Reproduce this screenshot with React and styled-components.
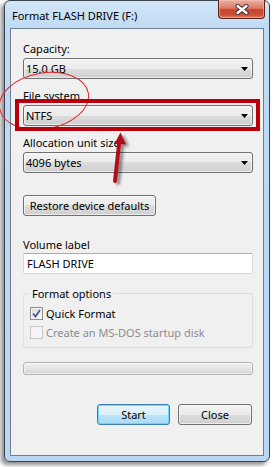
import React from 'react';
import styled, { createGlobalStyle } from 'styled-components';

const GlobalStyle = createGlobalStyle`
	html, body {
		margin: 0;
		padding: 0;
		background: #ffffff;
	}
	body {
		font-family: 'Noto Sans', 'Open Sans', sans-serif;
		font-size: 11px;
		color: #000;
	}
	* {
		box-sizing: border-box;
	}
`;

const Page = styled.div`
	position: relative;
	width: 278px;
	height: 467px;
	padding: 0 8px 0 4px;
	overflow: hidden;
`;

const Window = styled.div`
	width: 266px;
	height: 462px;
	border: 1px solid #3a4350;
	border-radius: 6px;
	background: linear-gradient(#d3e6f8, #bfdaf4 28px, #bad6f3);
	box-shadow: -3px 3px 4px rgba(0, 0, 0, 0.45);
	display: flex;
	flex-direction: column;
`;

const TitleBar = styled.div`
	height: 27px;
	display: flex;
	align-items: flex-start;
	padding-left: 7px;
	flex-shrink: 0;
`;

const Title = styled.div`
	line-height: 29px;
	font-size: 11px;
	color: #000;
	white-space: nowrap;
`;

const CloseButton = styled.div`
	margin-left: auto;
	margin-right: 4px;
	margin-top: -1px;
	width: 47px;
	height: 19px;
	border: 1px solid #5a2218;
	border-top: none;
	border-radius: 0 0 4px 4px;
	background: linear-gradient(#eab1a4, #dc7b66 45%, #c5442b 55%, #cd5337 85%, #e0856a);
	box-shadow: inset 0 0 0 1px rgba(255, 200, 190, 0.45);
	display: flex;
	align-items: center;
	justify-content: center;
`;

const Client = styled.div`
	flex: 1;
	margin: 0 5px 5px 5px;
	border: 1px solid #6e7e90;
	background: #f0f0f0;
	padding: 12px 10px 0 12px;
	display: flex;
	flex-direction: column;
`;

const Label = styled.div`
	height: 15px;
	line-height: 15px;
	margin-top: ${p => p.$top || 0}px;
	color: ${p => (p.$disabled ? '#8d8d8d' : '#000')};
	white-space: nowrap;
`;

const Select = styled.div`
	height: 21px;
	margin-top: 2px;
	border: 1px solid #707070;
	border-radius: 3px;
	background: linear-gradient(#f2f2f2, #ebebeb 50%, #dddddd 50%, #cfcfcf);
	box-shadow: inset 0 0 0 1px rgba(255, 255, 255, 0.6);
	display: flex;
	align-items: center;
	padding: 0 4px 0 2px;
`;

const SelectText = styled.span`
	flex: 1;
	line-height: 19px;
`;

const Field = styled.div`
	margin-bottom: 9px;
`;

const PushButton = styled.div`
	height: 21px;
	width: ${p => p.$width}px;
	margin-top: ${p => p.$top || 0}px;
	border: 1px solid ${p => (p.$default ? '#3c7fb1' : '#707070')};
	border-radius: 3px;
	background: ${p => (p.$default
		? 'linear-gradient(#eaf6fd, #d9f0fc 50%, #bee6fd 50%, #a7d9f5)'
		: 'linear-gradient(#f2f2f2, #ebebeb 50%, #dddddd 50%, #cfcfcf)')};
	box-shadow: ${p => (p.$default
		? 'inset 0 0 0 1px #6fd6fb'
		: 'inset 0 0 0 1px rgba(255, 255, 255, 0.6)')};
	display: flex;
	align-items: center;
	justify-content: center;
	line-height: 19px;
	white-space: nowrap;
	flex-shrink: 0;
`;

const TextInput = styled.div`
	height: 21px;
	margin-top: 1px;
	background: #fff;
	border: 1px solid #d6d8de;
	border-top-color: #abadb3;
	border-radius: 2px;
	padding-left: 3px;
	line-height: 19px;
`;

const GroupBox = styled.fieldset`
	margin: 12px 0 0 0;
	padding: 5px 6px 7px 6px;
	border: 1px solid #d5dfe5;
	border-radius: 3px;
	min-width: 0;
	display: flex;
	flex-direction: column;
	gap: 4px;
`;

const Legend = styled.legend`
	padding: 0 2px;
	line-height: 15px;
	margin-left: 0;
`;

const CheckRow = styled.div`
	height: 15px;
	display: flex;
	align-items: center;
	gap: 3px;
	color: ${p => (p.$disabled ? '#8d8d8d' : '#000')};
	white-space: nowrap;
`;

const CheckBox = styled.div`
	width: 13px;
	height: 13px;
	border: 1px solid ${p => (p.$disabled ? '#c7c7c7' : '#8e8f8f')};
	background: ${p => (p.$disabled
		? '#f4f4f4'
		: 'linear-gradient(135deg, #dcdcdc, #fbfbfb)')};
	box-shadow: inset 0 0 0 1px ${p => (p.$disabled ? '#f4f4f4' : '#f4f4f4')};
	display: flex;
	align-items: center;
	justify-content: center;
	flex-shrink: 0;
`;

const Progress = styled.div`
	height: 13px;
	margin-top: 14px;
	border: 1px solid #b2b2b2;
	border-radius: 3px;
	background: linear-gradient(#f3f3f3, #e3e3e3 50%, #d6d6d6);
	box-shadow: inset 0 0 0 1px rgba(255, 255, 255, 0.55);
`;

const ButtonRow = styled.div`
	margin-top: 29px;
	display: flex;
	justify-content: flex-end;
	gap: 8px;
	padding-right: 1px;
`;

const Overlay = styled.svg`
	position: absolute;
	left: 0;
	top: 0;
	pointer-events: none;
`;

function Arrow() {
	return (
		<svg width="7" height="4" viewBox="0 0 7 4">
			<path d="M0 0h7L3.5 4z" fill="#000" />
		</svg>
	);
}

function Dropdown({ value }) {
	return (
		<Select>
			<SelectText>{value}</SelectText>
			<Arrow />
		</Select>
	);
}

export default function App() {
	return (
		<>
			<GlobalStyle />
			<Page>
				<Window>
					<TitleBar>
						<Title>Format FLASH DRIVE (F:)</Title>
						<CloseButton>
							<svg width="14" height="11" viewBox="0 0 14 11">
								<path d="M2.5 2l9 7M11.5 2l-9 7" stroke="#3a2e2c" strokeWidth="4.2" strokeLinecap="round" />
								<path d="M2.5 2l9 7M11.5 2l-9 7" stroke="#fff" strokeWidth="2.4" strokeLinecap="round" />
							</svg>
						</CloseButton>
					</TitleBar>
					<Client>
						<Field>
							<Label>Capacity:</Label>
							<Dropdown value="15.0 GB" />
						</Field>
						<Field>
							<Label>File system</Label>
							<Dropdown value="NTFS" />
						</Field>
						<Field>
							<Label>Allocation unit size</Label>
							<Dropdown value="4096 bytes" />
						</Field>
						<PushButton $width={133} $top={13}>Restore device defaults</PushButton>
						<Label $top={21}>Volume label</Label>
						<TextInput>FLASH DRIVE</TextInput>
						<GroupBox>
							<Legend>Format options</Legend>
							<CheckRow>
								<CheckBox>
									<svg width="9" height="9" viewBox="0 0 9 9">
										<path d="M1 4.5l2.5 3L8 1" fill="none" stroke="#4a5794" strokeWidth="1.8" />
									</svg>
								</CheckBox>
								Quick Format
							</CheckRow>
							<CheckRow $disabled>
								<CheckBox $disabled />
								Create an MS-DOS startup disk
							</CheckRow>
						</GroupBox>
						<Progress />
						<ButtonRow>
							<PushButton $width={73} $default>Start</PushButton>
							<PushButton $width={74}>Close</PushButton>
						</ButtonRow>
					</Client>
				</Window>
				<Overlay width="278" height="467" viewBox="0 0 278 467">
					<defs>
						<filter id="shadow" x="-50%" y="-20%" width="200%" height="140%">
							<feDropShadow dx="3" dy="2" stdDeviation="1.5" floodColor="#000" floodOpacity="0.45" />
						</filter>
					</defs>
					<ellipse cx="44" cy="101" rx="45" ry="28" transform="rotate(-10 44 101)" fill="none" stroke="#e02a2a" strokeWidth="1" />
					<rect x="17" y="101" width="241" height="28" fill="none" stroke="#b8000c" strokeWidth="4" />
					<g filter="url(#shadow)">
						<path d="M115 181L119.3 142" stroke="#b0101a" strokeWidth="4" strokeLinecap="round" />
						<path d="M120.5 132.5L126 144.5L114.5 143.5Z" fill="#b0101a" />
					</g>
				</Overlay>
			</Page>
		</>
	);
}
